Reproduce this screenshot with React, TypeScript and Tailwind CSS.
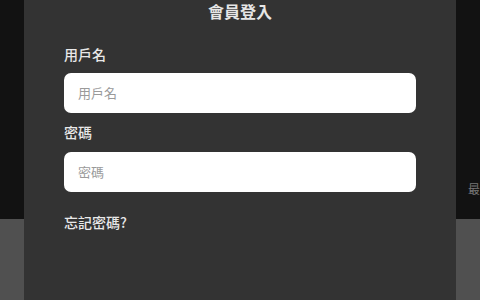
import React from "react";

const font = { fontFamily: '"Noto Sans CJK TC", "Noto Sans", sans-serif' };

export default function App() {
  return (
    <div className="w-[480px] h-[300px] flex bg-[#121212] overflow-hidden" style={font}>
      {/* left backdrop */}
      <div className="w-[24px] flex flex-col">
        <div className="h-[219px] bg-[#121212]" />
        <div className="flex-1 bg-[#505050]" />
      </div>

      {/* modal */}
      <div className="w-[432px] h-full bg-[#333333] flex flex-col px-[40px]">
        <div className="h-[22px] flex items-center justify-center text-[16px] font-bold text-[#e6e6e6] leading-[22px]">
          會員登入
        </div>
        <div className="mt-[22px] text-[14px] font-medium text-[#e8e8e8] leading-[20px]">用戶名</div>
        <div className="mt-[9px] h-[40px] bg-white rounded-[7px] flex items-center px-[14px] text-[13px] text-[#9a9a9a]">
          用戶名
        </div>
        <div className="mt-[9px] text-[14px] font-medium text-[#e8e8e8] leading-[20px]">密碼</div>
        <div className="mt-[10px] h-[40px] bg-white rounded-[7px] flex items-center px-[14px] text-[13px] text-[#9a9a9a]">
          密碼
        </div>
        <div className="mt-[20px] text-[14px] font-medium text-[#e8e8e8] leading-[20px]">忘記密碼?</div>
      </div>

      {/* right backdrop */}
      <div className="flex-1 flex flex-col">
        <div className="h-[219px] bg-[#121212] relative">
          <span className="absolute left-[12px] top-[183px] text-[12px] text-[#777] leading-none">最</span>
        </div>
        <div className="flex-1 bg-[#505050]" />
      </div>
    </div>
  );
}
